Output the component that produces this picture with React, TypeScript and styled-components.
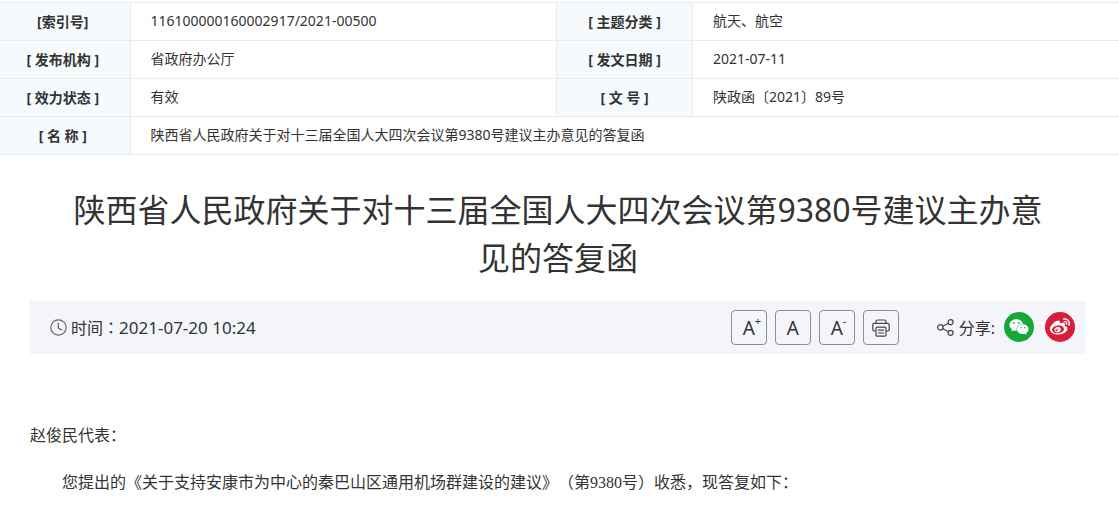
import React from "react";
import styled, { createGlobalStyle } from "styled-components";
import { FaWeixin, FaWeibo } from "react-icons/fa";

const sans = `"Noto Sans", "Noto Sans CJK SC", sans-serif`;

const GlobalStyle = createGlobalStyle`
  * { box-sizing: border-box; }
  body { margin: 0; background: #fff; color: #333; font-family: ${sans}; }
`;

const Page = styled.main`
  padding-top: 2px;
  text-spacing-trim: space-all;
`;

const InfoTable = styled.table`
  width: 100%;
  table-layout: fixed;
  border-collapse: collapse;
  border-top: 1px solid #e9eaeb;
  font-size: 14px;
  line-height: 20px;
`;

const Row = styled.tr`
  height: 38px;
  border-bottom: 1px solid #e9eaeb;
`;

const Label = styled.th<{ $width: number }>`
  width: ${(p) => p.$width}px;
  padding: 0 4px 0 0;
  background: #f6fafd;
  border-right: 1px solid #e9eaeb;
  font-weight: 700;
  text-align: center;
  & ~ & { padding: 0; }
`;

const Value = styled.td`
  padding: 0 20px 2px;
  border-right: 1px solid #e9eaeb;
  &:last-child { border-right: 0; }
`;

const Article = styled.article`
  padding: 31px 33px 0 30px;
`;

const Title = styled.h1`
  margin: 0 0 19px;
  padding: 0 30px;
  font-size: 32px;
  line-height: 48px;
  font-weight: 400;
  text-align: center;
`;

const Bar = styled.div`
  display: flex;
  align-items: center;
  justify-content: space-between;
  height: 53px;
  padding: 0 11px 0 20px;
  background: #f4f5fb;
  font-size: 16px;
  line-height: 24px;
`;

const Group = styled.div<{ $gap: number }>`
  display: flex;
  align-items: center;
  gap: ${(p) => p.$gap}px;
`;

const WideColon = styled.span`
  font-family: "Noto Sans CJK TC", sans-serif;
`;

const Time = styled.time`
  font-size: 17px;
`;

const ToolButton = styled.button`
  position: relative;
  display: flex;
  align-items: center;
  justify-content: center;
  width: 36px;
  height: 35px;
  padding: 0;
  border: 1px solid #8c8d91;
  border-radius: 4px;
  background: transparent;
  color: #333;
  font-family: ${sans};
  font-size: 19px;
  line-height: 24px;
`;

const Sup = styled.sup`
  position: absolute;
  top: 4px;
  left: 23px;
  font-size: 11px;
  line-height: 12px;
`;

const ShareLinks = styled.div`
  display: flex;
  gap: 11px;
  padding-bottom: 2px;
`;

const ShareLink = styled.a<{ $color: string }>`
  display: flex;
  align-items: center;
  justify-content: center;
  width: 30px;
  height: 30px;
  border-radius: 50%;
  background: ${(p) => p.$color};
  color: #fff;
`;

const Body = styled.div`
  padding-top: 66px;
  font-family: "Liberation Serif", "Noto Sans CJK SC", sans-serif;
  font-size: 16px;
  line-height: 32px;
`;

const Paragraph = styled.p<{ $indent?: boolean }>`
  margin: 0 0 15px;
  text-indent: ${(p) => (p.$indent ? "2em" : "0")};
`;

const ClockIcon = () => (
  <svg width="17" height="17" viewBox="0 0 17 17" fill="none" stroke="#666" aria-hidden="true">
    <circle cx="8.5" cy="8.5" r="7.7" strokeWidth="1.2" />
    <path d="M8.3 3.8v5l3.6 2.4" strokeWidth="1.3" />
  </svg>
);

const PrinterIcon = () => (
  <svg width="18" height="18" viewBox="0 0 18 18" fill="none" stroke="#444" strokeWidth="1.2" aria-hidden="true">
    <path d="M4 4.2V2.6Q4 1 5.6 1h6.8Q14 1 14 2.6v1.6" />
    <path d="M4 12H2.2Q.8 12 .8 10.6V5.8Q.8 4.4 2.2 4.4h13.6q1.4 0 1.4 1.4v4.8q0 1.4-1.4 1.4H14" />
    <rect x="4" y="8.2" width="10" height="9" rx="1.2" />
    <path d="M6 11.2h6M6 14h6" />
  </svg>
);

const ShareIcon = () => (
  <svg width="17" height="17" viewBox="0 0 17 17" fill="none" stroke="#444" strokeWidth="1.2" aria-hidden="true">
    <circle cx="3.4" cy="8.4" r="2.7" />
    <circle cx="13.6" cy="3.2" r="2.5" />
    <circle cx="13.6" cy="13.8" r="2.5" />
    <path d="M5.8 7.2l5.6-2.9M5.8 9.7l5.6 3" />
  </svg>
);

const rows: [string, string, string, string][] = [
  ["[索引号]", "116100000160002917/2021-00500", "[ 主题分类 ]", "航天、航空"],
  ["[ 发布机构 ]", "省政府办公厅", "[ 发文日期 ]", "2021-07-11"],
  ["[ 效力状态 ]", "有效", "[ 文 号 ]", "陕政函〔2021〕89号"],
];

const title = "陕西省人民政府关于对十三届全国人大四次会议第9380号建议主办意见的答复函";

export default function App() {
  return (
    <Page lang="zh-CN">
      <GlobalStyle />
      <InfoTable>
        <tbody>
          {rows.map(([labelA, valueA, labelB, valueB]) => (
            <Row key={labelA}>
              <Label scope="row" $width={130}>{labelA}</Label>
              <Value>{valueA}</Value>
              <Label scope="row" $width={136}>{labelB}</Label>
              <Value>{valueB}</Value>
            </Row>
          ))}
          <Row>
            <Label scope="row" $width={130}>[ 名 称 ]</Label>
            <Value colSpan={3}>{title}</Value>
          </Row>
        </tbody>
      </InfoTable>
      <Article>
        <Title>{title}</Title>
        <Bar>
          <Group $gap={4}>
            <ClockIcon />
            <span>时间<WideColon lang="zh-TW">：</WideColon><Time dateTime="2021-07-20T10:24">2021-07-20 10:24</Time></span>
          </Group>
          <Group $gap={38}>
            <Group $gap={8}>
              <ToolButton type="button" aria-label="放大字号">A<Sup>+</Sup></ToolButton>
              <ToolButton type="button" aria-label="默认字号">A</ToolButton>
              <ToolButton type="button" aria-label="缩小字号">A<Sup>-</Sup></ToolButton>
              <ToolButton type="button" aria-label="打印"><PrinterIcon /></ToolButton>
            </Group>
            <Group $gap={9}>
              <Group $gap={5}>
                <ShareIcon />
                <span>分享:</span>
              </Group>
              <ShareLinks>
                <ShareLink href="#wechat" $color="#15a838" aria-label="微信"><FaWeixin size={20} /></ShareLink>
                <ShareLink href="#weibo" $color="#d81e3a" aria-label="微博"><FaWeibo size={20} /></ShareLink>
              </ShareLinks>
            </Group>
          </Group>
        </Bar>
        <Body>
          <Paragraph>赵俊民代表：</Paragraph>
          <Paragraph $indent>您提出的《关于支持安康市为中心的秦巴山区通用机场群建设的建议》（第9380号）收悉，现答复如下：</Paragraph>
        </Body>
      </Article>
    </Page>
  );
}
